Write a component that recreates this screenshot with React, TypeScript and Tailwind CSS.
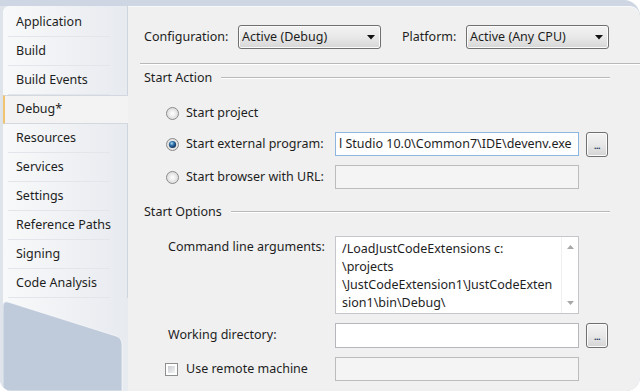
import React from "react";

const tabs = [
  "Application",
  "Build",
  "Build Events",
  "Debug*",
  "Resources",
  "Services",
  "Settings",
  "Reference Paths",
  "Signing",
  "Code Analysis",
];

function Radio({ checked }: { checked?: boolean }) {
  return (
    <svg width="13" height="13" viewBox="0 0 13 13" className="shrink-0">
      <defs>
        <radialGradient id="rbg" cx="0.5" cy="0.5" r="0.6">
          <stop offset="0" stopColor="#ffffff" />
          <stop offset="1" stopColor="#d6d6d6" />
        </radialGradient>
        <radialGradient id="rdot" cx="0.4" cy="0.35" r="0.7">
          <stop offset="0" stopColor="#a8dbfb" />
          <stop offset="0.45" stopColor="#2c6ba3" />
          <stop offset="1" stopColor="#0b2a4a" />
        </radialGradient>
      </defs>
      <circle cx="6.5" cy="6.5" r="6" fill="url(#rbg)" stroke="#8a8a8a" />
      <circle cx="6.5" cy="6.5" r="4.3" fill="none" stroke="#e4e4e4" strokeWidth="1" />
      {checked && <circle cx="6.5" cy="6.5" r="3.6" fill="url(#rdot)" />}
    </svg>
  );
}

function Dropdown({ value }: { value: string }) {
  return (
    <div className="w-[143px] h-[24px] rounded-[3px] border border-[#707070] bg-gradient-to-b from-[#f3f3f3] via-[#e9e9e9] to-[#d6d6d6] shadow-[inset_0_0_0_1px_#fbfbfb] flex items-center pl-[3px] pr-[5px]">
      <span className="flex-1">{value}</span>
      <svg width="8" height="5" viewBox="0 0 8 5">
        <path d="M0 0 L8 0 L4 4.5 Z" fill="#111" />
      </svg>
    </div>
  );
}

function DotsButton() {
  return (
    <div className="ml-[7px] w-[22px] h-[25px] rounded-[3px] border border-[#707070] bg-gradient-to-b from-[#f3f3f3] via-[#e8e8e8] to-[#d4d4d4] shadow-[inset_0_0_0_1px_#fbfbfb] flex items-end justify-center pb-[6px]">
      <span className="text-[9px] font-bold leading-none text-[#1c3a63] tracking-[-0.5px]">...</span>
    </div>
  );
}

function SectionHeader({ title }: { title: string }) {
  return (
    <div className="flex items-center h-[16px] mr-[30px]">
      <span>{title}</span>
      <div className="flex-1 ml-[9px] border-t border-[#b9b9b9] border-b border-b-white" />
    </div>
  );
}

export default function App() {
  return (
    <div className="w-[640px] h-[391px] bg-white font-['Segoe_UI','Noto_Sans',sans-serif] text-[12.5px] text-[#1e1e1e]">
      <div className="w-full h-full flex bg-[#cdd6e2] rounded-tr-[16px] rounded-br-[14px] rounded-bl-[12px] overflow-hidden pt-[6px]">
        {/* left tab strip */}
        <div className="w-[128px] pl-[3px] bg-[#dfe4eb] flex flex-col">
          <div className="flex-1 flex flex-col rounded-tl-[6px] bg-gradient-to-r from-[#f8f9fa] to-[#e7eaef]">
            <div className="h-[2px] border-r border-[#cfd5de]" />
            {tabs.map((t) =>
              t === "Debug*" ? (
                <div
                  key={t}
                  className="h-[29px] flex items-center pl-[11px] bg-[#f3f3f3] border-y border-[#d3d8e0] border-l-2 border-l-[#f1c36f] whitespace-nowrap"
                >
                  {t}
                </div>
              ) : (
                <div key={t} className="h-[29px] border-r border-[#cfd5de]">
                  <div className="h-full ml-[5px] mr-[17px] border-b border-[#e2e5ea] flex items-center pl-[8px] whitespace-nowrap">
                    {t}
                  </div>
                </div>
              )
            )}
            <svg className="flex-1 w-full" viewBox="0 0 125 93" preserveAspectRatio="none">
              <path
                d="M0 8 Q0 3 5 4 L113 38 Q119 40 119 47 L119 93 L0 93 Z"
                fill="#bfcadb"
                stroke="#ffffff"
                strokeOpacity="0.6"
              />
            </svg>
          </div>
        </div>

        {/* content */}
        <div className="flex-1 bg-[#f0f0f0] rounded-tr-[10px] rounded-br-[12px] border-t border-[#f7f9fb] pl-[16px] flex flex-col">
          <div className="flex items-center mt-[18px] h-[24px]">
            <span className="w-[94px]">Configuration:</span>
            <Dropdown value="Active (Debug)" />
            <span className="ml-[21px] w-[64px]">Platform:</span>
            <Dropdown value="Active (Any CPU)" />
          </div>

          <div className="mt-[14px] -ml-[4px] border-t border-[#b9b9b9] border-b border-b-white" />

          <div className="mt-[5px]">
            <SectionHeader title="Start Action" />
          </div>

          <div className="mt-[15px] h-[24px] flex items-center pl-[22px]">
            <Radio />
            <span className="ml-[7px]">Start project</span>
          </div>
          <div className="mt-[7px] h-[24px] flex items-center pl-[22px]">
            <div className="w-[169px] flex items-center">
              <Radio checked />
              <span className="ml-[7px]">Start external program:</span>
            </div>
            <div className="w-[244px] h-[24px] border border-[#8cb6df] bg-white flex items-center pl-[3px] overflow-hidden whitespace-nowrap">
              l Studio 10.0\Common7\IDE\devenv.exe
            </div>
            <DotsButton />
          </div>
          <div className="mt-[9px] h-[24px] flex items-center pl-[22px]">
            <div className="w-[169px] flex items-center">
              <Radio />
              <span className="ml-[7px]">Start browser with URL:</span>
            </div>
            <div className="w-[244px] h-[24px] border border-[#bcbcbc] bg-[#f4f4f4]" />
          </div>

          <div className="mt-[15px]">
            <SectionHeader title="Start Options" />
          </div>

          <div className="mt-[16px] flex pl-[24px]">
            <span className="w-[167px] pt-[2px]">Command line arguments:</span>
            <div className="w-[244px] h-[78px] border border-[#c4c6cb] bg-white flex">
              <div className="flex-1 pl-[6px] pt-[3px] leading-[18px] whitespace-nowrap overflow-hidden">
                <div>/LoadJustCodeExtensions c:</div>
                <div>\projects</div>
                <div>\JustCodeExtension1\JustCodeExten</div>
                <div>sion1\bin\Debug\</div>
              </div>
              <div className="w-[17px] border-l border-[#f0f0f0] flex flex-col items-center justify-between py-[8px]">
                <svg width="7" height="4" viewBox="0 0 7 4">
                  <path d="M0 4 L7 4 L3.5 0 Z" fill="#a8a8a8" />
                </svg>
                <svg width="7" height="4" viewBox="0 0 7 4">
                  <path d="M0 0 L7 0 L3.5 4 Z" fill="#a8a8a8" />
                </svg>
              </div>
            </div>
          </div>

          <div className="mt-[9px] h-[25px] flex items-center pl-[24px]">
            <span className="w-[167px]">Working directory:</span>
            <div className="w-[244px] h-[25px] border border-[#b5b7bc] bg-white" />
            <DotsButton />
          </div>

          <div className="mt-[9px] h-[24px] flex items-center pl-[21px]">
            <div className="w-[170px] flex items-center">
              <div className="w-[13px] h-[13px] border border-[#8e8f8f] bg-white p-[2px]">
                <div className="w-full h-full bg-gradient-to-br from-[#c9ccd2] to-[#f4f4f4]" />
              </div>
              <span className="ml-[8px]">Use remote machine</span>
            </div>
            <div className="w-[244px] h-[24px] border border-[#bcbcbc] bg-[#f4f4f4]" />
          </div>
        </div>
      </div>
    </div>
  );
}
